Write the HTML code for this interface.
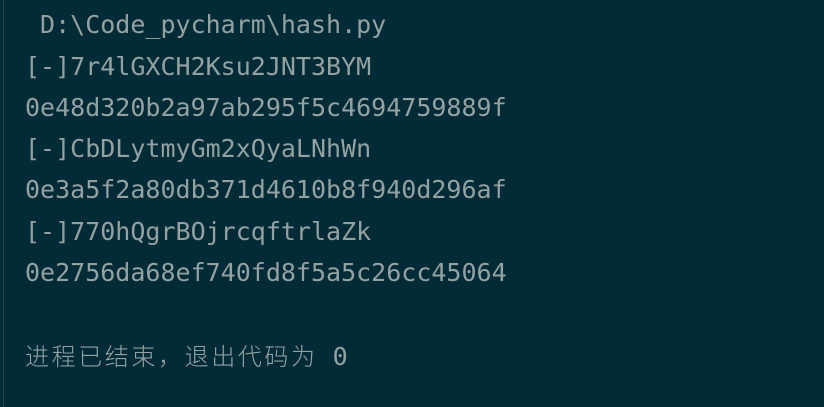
<!DOCTYPE html>
<html><head><meta charset="utf-8"><style>
html,body{margin:0;padding:0;}
body{width:824px;height:407px;background:#022b38;overflow:hidden;position:relative;}
.edge{position:absolute;left:3px;top:0;width:1px;height:407px;background:#1d4450;}
.l{position:absolute;left:25px;font-family:"DejaVu Sans Mono","Liberation Mono",monospace;font-size:25px;color:#93a1a1;white-space:pre;line-height:30px;}
.cjk{font-family:"Noto Sans CJK SC",sans-serif;font-size:24px;letter-spacing:2.6px;font-weight:300;}
</style></head><body>
<div class="edge"></div>
<div class="l" style="top:10px"> D:\Code_pycharm\hash.py</div>
<div class="l" style="top:52px">[-]7r4lGXCH2Ksu2JNT3BYM</div>
<div class="l" style="top:93px">0e48d320b2a97ab295f5c4694759889f</div>
<div class="l" style="top:134px">[-]CbDLytmyGm2xQyaLNhWn</div>
<div class="l" style="top:175px">0e3a5f2a80db371d4610b8f940d296af</div>
<div class="l" style="top:217px">[-]770hQgrBOjrcqftrlaZk</div>
<div class="l" style="top:258px">0e2756da68ef740fd8f5a5c26cc45064</div>
<div class="l" style="top:340px"><span class="cjk">进程已结束，退出代码为</span> 0</div>
</body></html>
